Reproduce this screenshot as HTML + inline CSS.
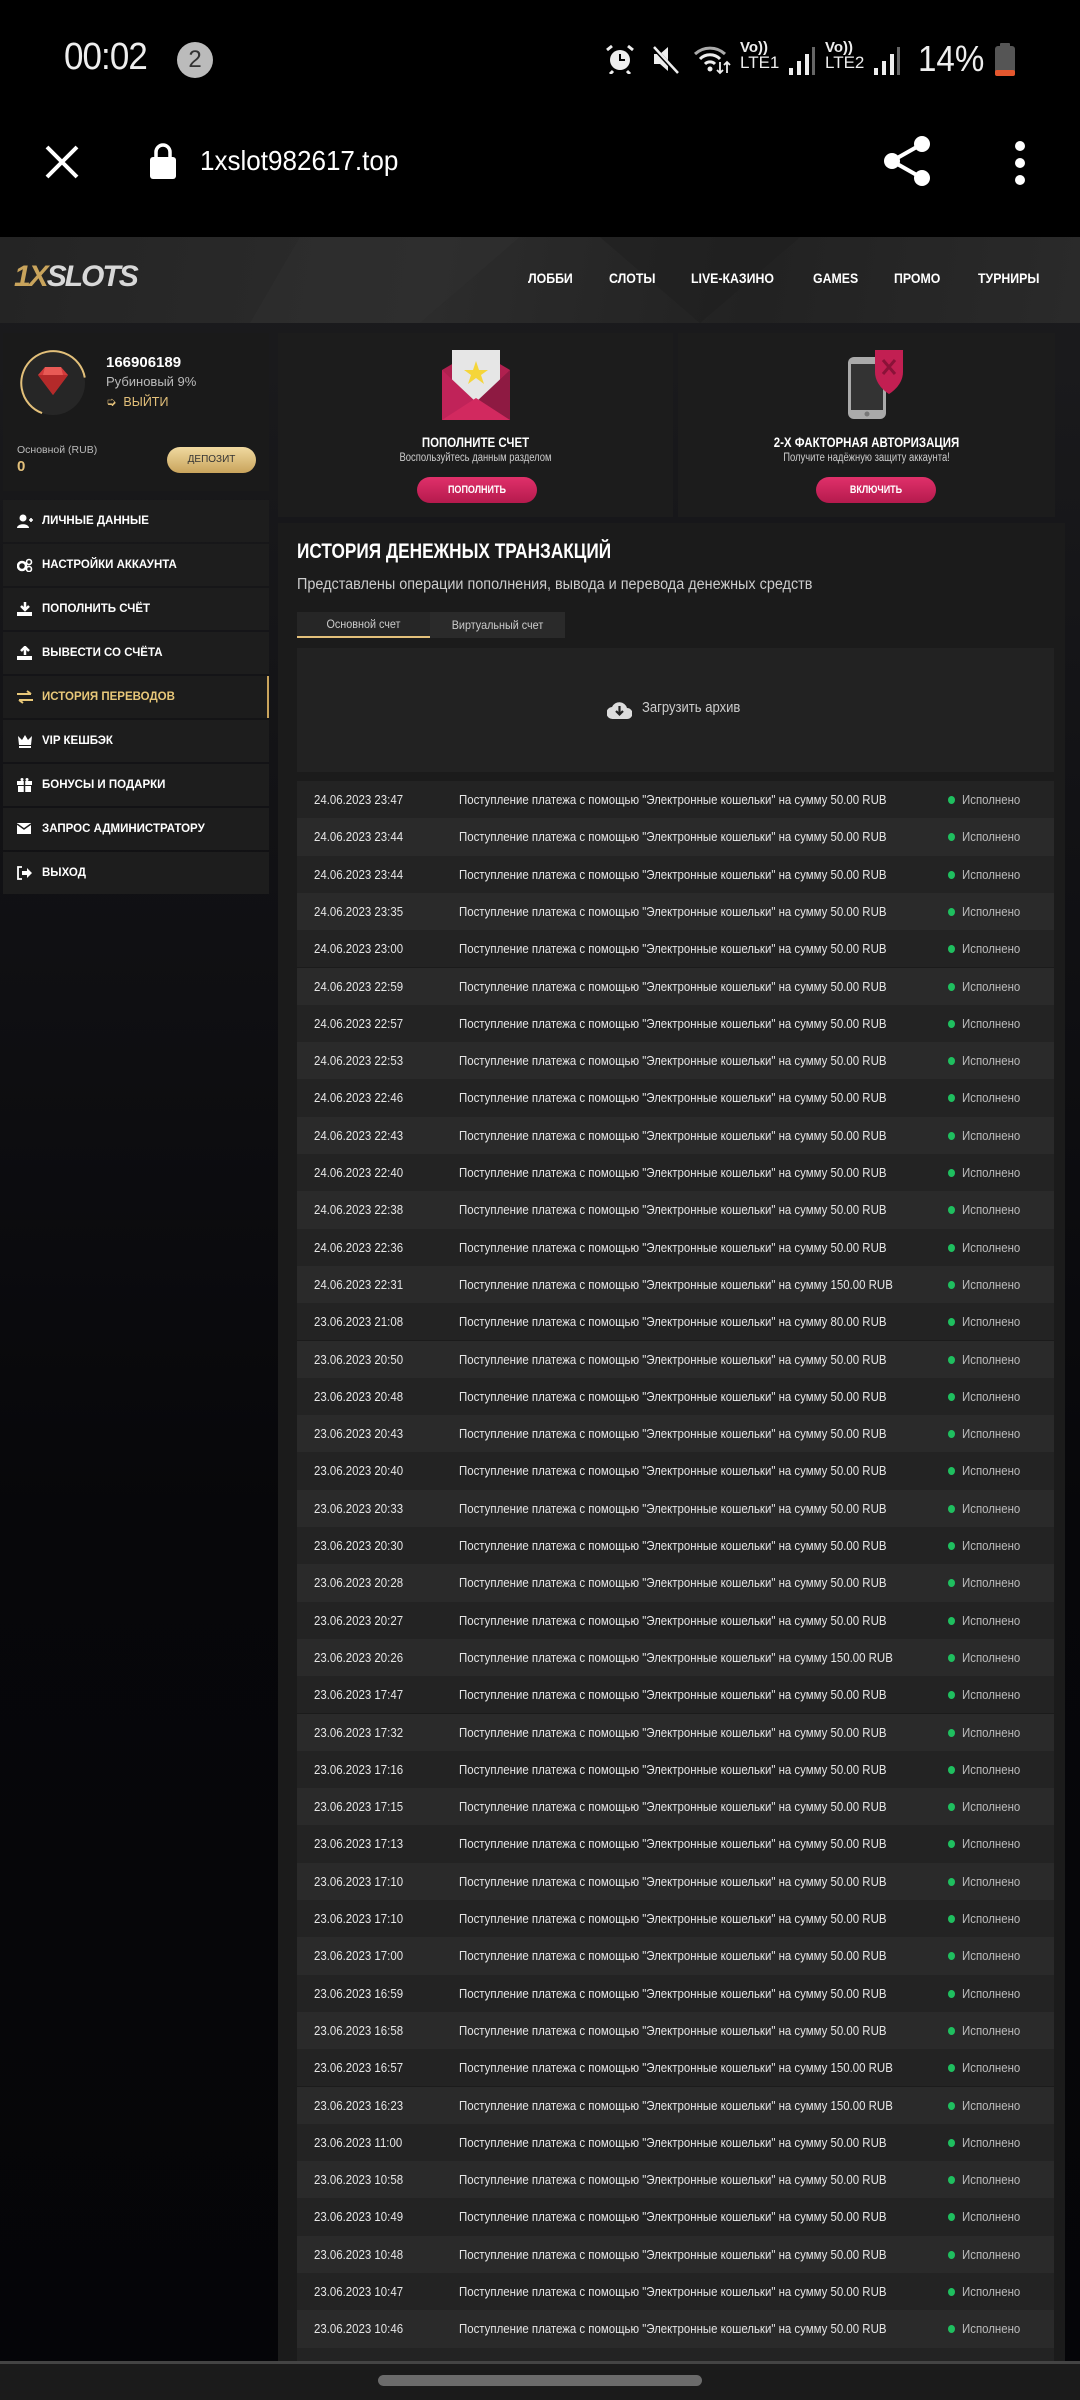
<!DOCTYPE html>
<html><head><meta charset="utf-8">
<style>
*{margin:0;padding:0;box-sizing:border-box}
body{width:1080px;height:2400px;background:#000;position:relative;overflow:hidden;font-family:"Liberation Sans",sans-serif;color:#fff}
.a{position:absolute}
.hdr{left:0;top:237px;width:1080px;height:86px;background:linear-gradient(100deg,#242424 0%,#2c2c2c 40%,#222 70%,#2a2a2a 100%)}
.nav{top:270px;font-size:14px;font-weight:bold;color:#fff;transform:scaleX(.88);transform-origin:left}
.card{background:#1c1c1c}
.mi{left:3px;width:266px;height:42px;background:#1d1d1d;font-size:11.5px;font-weight:bold;line-height:42px;padding-left:39px}
.mi svg{position:absolute;left:14px;top:14px}
.btn{height:26px;border-radius:13px;background:linear-gradient(180deg,#e0306a,#b51a4d);font-size:11px;font-weight:bold;text-align:center;line-height:26px}
.cx{transform:scaleX(.82);transform-origin:center}
.r{position:absolute;left:297px;width:757px;height:37.3px;font-size:13px;color:#e6e6e6;line-height:37.3px}
.r:nth-of-type(odd){background:#232323}.r:nth-of-type(even){background:#2a2a2a}
.r b{position:absolute;font-weight:normal;transform:scaleX(.88);transform-origin:left;white-space:nowrap}
.r .d{left:17px}.r .t{left:162px}.r .s{left:665px;color:#bbb}
.r i{position:absolute;left:651px;top:15px;width:7px;height:8px;border-radius:50%;background:#1fbf5f}
</style></head><body>
<!-- status bar -->
<div class="a" style="left:64px;top:36px;font-size:38px;color:#eee;letter-spacing:-1px;transform:scaleX(.92);transform-origin:left">00:02</div>
<div class="a" style="left:177px;top:42px;width:36px;height:36px;border-radius:50%;background:#bbb;color:#333;font-size:24px;text-align:center;line-height:36px">2</div>
<svg class="a" style="left:605px;top:44px" width="30" height="30" viewBox="0 0 30 30"><circle cx="15" cy="16" r="10" fill="#eee"/><path d="M15 10v6h5" stroke="#000" stroke-width="2" fill="none"/><path d="M2 6l5-4M28 6l-5-4M8 27l-3 3M22 27l3 3" stroke="#eee" stroke-width="3"/></svg>
<svg class="a" style="left:650px;top:44px" width="30" height="30" viewBox="0 0 30 30"><path d="M4 10h6l8-7v24l-8-7H4z" fill="#eee"/><path d="M3 3l24 26" stroke="#000" stroke-width="4"/><path d="M4 3l24 26" stroke="#eee" stroke-width="2.5"/></svg>
<svg class="a" style="left:693px;top:44px" width="42" height="32" viewBox="0 0 42 32"><path d="M2 10a22 22 0 0 1 30 0" stroke="#aaa" stroke-width="3" fill="none"/><path d="M7 15a14 14 0 0 1 20 0M12 20a7 7 0 0 1 10 0" stroke="#eee" stroke-width="3" fill="none"/><circle cx="17" cy="25" r="2.5" fill="#eee"/><path d="M27 18v11M24 26l3 3 3-3M34 29V18M31 21l3-3 3 3" stroke="#eee" stroke-width="1.8" fill="none"/></svg>
<div class="a" style="left:740px;top:40px;font-size:15px;color:#eee;line-height:15px;font-weight:bold">Vo))<br><span style="font-size:17px;font-weight:normal">LTE1</span></div>
<svg class="a" style="left:788px;top:46px" width="28" height="30"><rect x="1" y="22" width="4" height="7" fill="#eee"/><rect x="9" y="15" width="4" height="14" fill="#eee"/><rect x="17" y="8" width="4" height="21" fill="#eee"/><rect x="24" y="1" width="3" height="28" fill="#666"/></svg>
<div class="a" style="left:825px;top:40px;font-size:15px;color:#eee;line-height:15px;font-weight:bold">Vo))<br><span style="font-size:17px;font-weight:normal">LTE2</span></div>
<svg class="a" style="left:873px;top:46px" width="28" height="30"><rect x="1" y="22" width="4" height="7" fill="#eee"/><rect x="9" y="15" width="4" height="14" fill="#eee"/><rect x="17" y="8" width="4" height="21" fill="#eee"/><rect x="24" y="1" width="3" height="28" fill="#666"/></svg>
<div class="a" style="left:918px;top:38px;font-size:36px;color:#eee;transform:scaleX(.92);transform-origin:left">14%</div>
<svg class="a" style="left:994px;top:43px" width="22" height="34"><rect x="6" y="0" width="10" height="4" rx="1" fill="#555"/><rect x="1" y="3" width="20" height="30" rx="3" fill="#555"/><rect x="1" y="27" width="20" height="6" rx="2" fill="#e4572e"/></svg>
<!-- browser bar -->
<svg class="a" style="left:44px;top:144px" width="36" height="36"><path d="M3 3l30 30M33 3L3 33" stroke="#fff" stroke-width="4"/></svg>
<svg class="a" style="left:148px;top:142px" width="30" height="38"><path d="M8 16V10a7 7 0 0 1 14 0v6" stroke="#fff" stroke-width="3.5" fill="none"/><rect x="2" y="15" width="26" height="22" rx="3" fill="#fff"/></svg>
<div class="a" style="left:200px;top:145px;font-size:28px;color:#fff;transform:scaleX(.93);transform-origin:left">1xslot982617.top</div>
<svg class="a" style="left:882px;top:134px" width="50" height="54"><circle cx="40" cy="10" r="8" fill="#fff"/><circle cx="10" cy="27" r="8" fill="#fff"/><circle cx="40" cy="44" r="8" fill="#fff"/><path d="M40 10L10 27L40 44" stroke="#fff" stroke-width="4" fill="none"/></svg>
<svg class="a" style="left:1013px;top:140px" width="14" height="46"><circle cx="7" cy="6" r="5" fill="#fff"/><circle cx="7" cy="23" r="5" fill="#fff"/><circle cx="7" cy="40" r="5" fill="#fff"/></svg>

<div class="a" style="left:0;top:237px;width:1080px;height:2124px;background:linear-gradient(180deg,#1c1c1e 0%,#111114 30%,#07070a 60%,#050508 100%)"></div>
<div class="a hdr"></div>
<svg class="a" style="left:0;top:237px" width="1080" height="86"><polygon points="300,0 520,0 420,86 250,86" fill="#2f2f2f" opacity=".5"/><polygon points="600,0 800,0 700,86" fill="#1e1e1e" opacity=".5"/></svg>
<div class="a" style="left:14px;top:260px;font-size:30px;font-weight:bold;font-style:italic;letter-spacing:-2px"><span style="color:#c9a45c">1X</span><span style="color:#d8d8d8">SLOTS</span></div>
<div class="a nav" style="left:528px">ЛОББИ</div>
<div class="a nav" style="left:609px">СЛОТЫ</div>
<div class="a nav" style="left:691px">LIVE-КАЗИНО</div>
<div class="a nav" style="left:813px">GAMES</div>
<div class="a nav" style="left:894px">ПРОМО</div>
<div class="a nav" style="left:978px">ТУРНИРЫ</div>

<!-- profile card -->
<div class="a card" style="left:3px;top:333px;width:266px;height:158px;background:#1a1a1a"></div>
<svg class="a" style="left:18px;top:348px" width="70" height="70" viewBox="0 0 70 70"><circle cx="35" cy="35" r="32" fill="#262626"/><path d="M35 3a32 32 0 1 1-28 48" stroke="#e3c07a" stroke-width="2" fill="none" transform="rotate(200 35 35)"/><path d="M20 27l7-8h16l7 8-15 20z" fill="#d33b3b"/><path d="M20 27h30L35 47z" fill="#b42a2a"/><path d="M27 19l-2 8h20l-2-8z" fill="#e85a55"/></svg>
<div class="a" style="left:106px;top:354px;font-size:15px;font-weight:bold">166906189</div>
<div class="a" style="left:106px;top:374px;font-size:13px;color:#bbb">Рубиновый 9%</div>
<div class="a" style="left:106px;top:394px;font-size:12.5px;color:#e3c07a">➭ &nbsp;ВЫЙТИ</div>
<div class="a" style="left:17px;top:444px;font-size:10.5px;color:#bbb">Основной (RUB)</div>
<div class="a" style="left:17px;top:458px;font-size:15px;font-weight:bold;color:#e3c07a">0</div>
<div class="a" style="left:167px;top:447px;width:89px;height:26px;border-radius:13px;background:linear-gradient(180deg,#f0d9a0,#c9a45c);color:#333;font-size:10px;text-align:center;line-height:26px">ДЕПОЗИТ</div>

<!-- menu -->
<div class="a mi" style="top:500px"><svg width="16" height="14"><circle cx="6" cy="4" r="3.5" fill="#fff"/><path d="M0 14c0-5 12-5 12 0z" fill="#fff"/><path d="M12 6h4M14 4v4" stroke="#fff" stroke-width="1.6"/></svg>ЛИЧНЫЕ ДАННЫЕ</div>
<div class="a mi" style="top:544px"><svg width="16" height="14"><circle cx="5" cy="8" r="4" fill="none" stroke="#fff" stroke-width="2.5"/><circle cx="12" cy="4" r="2.5" fill="none" stroke="#fff" stroke-width="1.6"/><circle cx="12" cy="11" r="2.5" fill="none" stroke="#fff" stroke-width="1.6"/></svg>НАСТРОЙКИ АККАУНТА</div>
<div class="a mi" style="top:588px"><svg width="16" height="14"><path d="M8 0v7M4 4l4 4 4-4" stroke="#fff" stroke-width="2.5" fill="none"/><rect x="0" y="10" width="15" height="4" fill="#fff"/></svg>ПОПОЛНИТЬ СЧЁТ</div>
<div class="a mi" style="top:632px"><svg width="16" height="14"><path d="M8 9V1M4 5l4-4 4 4" stroke="#fff" stroke-width="2.5" fill="none"/><rect x="0" y="10" width="15" height="4" fill="#fff"/></svg>ВЫВЕСТИ СО СЧЁТА</div>
<div class="a mi" style="top:676px;color:#e9c879;border-right:2px solid #c9a45c;background:#1c1c1c"><svg width="16" height="14"><path d="M0 4h14M10 1l4 3M16 10H2M6 13l-4-3" stroke="#e9c879" stroke-width="2" fill="none"/></svg>ИСТОРИЯ ПЕРЕВОДОВ</div>
<div class="a mi" style="top:720px"><svg width="16" height="14"><path d="M1 2l4 4 3-5 3 5 4-4-1 9H2z" fill="#fff"/><rect x="2" y="12" width="12" height="2" fill="#fff"/></svg>VIP КЕШБЭК</div>
<div class="a mi" style="top:764px"><svg width="16" height="14"><rect x="0" y="3" width="15" height="4" fill="#fff"/><rect x="1" y="8" width="13" height="6" fill="#fff"/><path d="M7.5 3V14" stroke="#1d1d1d" stroke-width="1.5"/><circle cx="5" cy="1.5" r="1.5" fill="#fff"/><circle cx="10" cy="1.5" r="1.5" fill="#fff"/></svg>БОНУСЫ И ПОДАРКИ</div>
<div class="a mi" style="top:808px"><svg width="16" height="14"><rect x="0" y="1" width="14" height="11" fill="#fff"/><path d="M0 2l7 5 7-5" stroke="#1d1d1d" stroke-width="1.5" fill="none"/></svg>ЗАПРОС АДМИНИСТРАТОРУ</div>
<div class="a mi" style="top:852px"><svg width="16" height="14"><path d="M5 1H1v12h4" stroke="#fff" stroke-width="1.8" fill="none"/><path d="M5 5h5V2l5 5-5 5V9H5z" fill="#fff"/></svg>ВЫХОД</div>

<!-- cards -->
<div class="a card" style="left:278px;top:333px;width:395px;height:184px"></div>
<div class="a card" style="left:678px;top:333px;width:377px;height:184px"></div>
<svg class="a" style="left:442px;top:350px" width="68" height="70" viewBox="0 0 68 70"><path d="M0 20L34 0 68 20v50H0z" fill="#b0204f"/><rect x="10" y="0" width="48" height="42" fill="#e6e6e6"/><path d="M10 42h48L34 58z" fill="#e6e6e6"/><path d="M0 20v50l34-18z" fill="#c02359"/><path d="M68 20v50L34 52z" fill="#8e1a42"/><path d="M0 70l34-22 34 22z" fill="#d2295f"/><polygon points="34,11 37,20 46,20 39,25 42,34 34,28 26,34 29,25 22,20 31,20" fill="#f5d53a"/></svg>
<svg class="a" style="left:846px;top:350px" width="60" height="70" viewBox="0 0 60 70"><rect x="2" y="7" width="38" height="62" rx="6" fill="#aaa"/><rect x="5" y="14" width="32" height="46" fill="#333"/><circle cx="21" cy="64" r="2.5" fill="#777"/><path d="M29 0h28v22c0 14-14 22-14 22s-14-8-14-22z" fill="#c21f52"/><path d="M37 10l12 14M49 10L37 24" stroke="#8a1238" stroke-width="3"/></svg>
<div class="a cx" style="left:278px;width:395px;text-align:center;top:434px;font-size:14px;font-weight:bold">ПОПОЛНИТЕ СЧЕТ</div>
<div class="a cx" style="left:278px;width:395px;text-align:center;top:452px;font-size:11.5px;color:#ccc">Воспользуйтесь данным разделом</div>
<div class="a btn" style="left:417px;top:477px;width:120px"><div class="cx">ПОПОЛНИТЬ</div></div>
<div class="a cx" style="left:678px;width:377px;text-align:center;top:434px;font-size:14px;font-weight:bold">2-Х ФАКТОРНАЯ АВТОРИЗАЦИЯ</div>
<div class="a cx" style="left:678px;width:377px;text-align:center;top:452px;font-size:11.5px;color:#ccc">Получите надёжную защиту аккаунта!</div>
<div class="a btn" style="left:816px;top:477px;width:120px"><div class="cx">ВКЛЮЧИТЬ</div></div>

<!-- history panel -->
<div class="a" style="left:278px;top:523px;width:787px;height:1838px;background:#1b1b1b"></div>
<div class="a" style="left:297px;top:540px;font-size:21px;font-weight:bold;white-space:nowrap;transform:scaleX(.82);transform-origin:left">ИСТОРИЯ ДЕНЕЖНЫХ ТРАНЗАКЦИЙ</div>
<div class="a" style="left:297px;top:576px;font-size:15.5px;color:#ccc;white-space:nowrap;transform:scaleX(.93);transform-origin:left">Представлены операции пополнения, вывода и перевода денежных средств</div>
<div class="a" style="left:297px;top:612px;width:133px;height:26px;background:#262626;border-bottom:2px solid #e3c07a;font-size:12px;color:#ccc;text-align:center;line-height:25px"><div class="cx" style="transform:scaleX(.9)">Основной счет</div></div>
<div class="a" style="left:430px;top:612px;width:135px;height:26px;background:#2a2a2a;font-size:12px;color:#ccc;text-align:center;line-height:26px"><div class="cx" style="transform:scaleX(.9)">Виртуальный счет</div></div>
<div class="a" style="left:297px;top:648px;width:757px;height:124px;background:#222"></div>
<svg class="a" style="left:607px;top:699px" width="25" height="22" viewBox="0 0 25 22"><path d="M6 20a6 6 0 0 1-1-12 8 8 0 0 1 15 1 5.5 5.5 0 0 1 0 11z" fill="#ddd"/><path d="M12.5 7v8M9 12l3.5 3.5L16 12" stroke="#222" stroke-width="2.2" fill="none"/></svg>
<div class="a" style="left:642px;top:700px;font-size:14.5px;color:#ccc;transform:scaleX(.9);transform-origin:left">Загрузить архив</div>

<div class="a" style="left:0;top:0">
<div class="r" style="top:781px"><b class="d">24.06.2023 23:47</b><b class="t">Поступление платежа с помощью "Электронные кошельки" на сумму 50.00 RUB</b><i></i><b class="s">Исполнено</b></div>
<div class="r" style="top:818.3px"><b class="d">24.06.2023 23:44</b><b class="t">Поступление платежа с помощью "Электронные кошельки" на сумму 50.00 RUB</b><i></i><b class="s">Исполнено</b></div>
<div class="r" style="top:855.6px"><b class="d">24.06.2023 23:44</b><b class="t">Поступление платежа с помощью "Электронные кошельки" на сумму 50.00 RUB</b><i></i><b class="s">Исполнено</b></div>
<div class="r" style="top:892.9px"><b class="d">24.06.2023 23:35</b><b class="t">Поступление платежа с помощью "Электронные кошельки" на сумму 50.00 RUB</b><i></i><b class="s">Исполнено</b></div>
<div class="r" style="top:930.2px"><b class="d">24.06.2023 23:00</b><b class="t">Поступление платежа с помощью "Электронные кошельки" на сумму 50.00 RUB</b><i></i><b class="s">Исполнено</b></div>
<div class="r" style="top:967.5px"><b class="d">24.06.2023 22:59</b><b class="t">Поступление платежа с помощью "Электронные кошельки" на сумму 50.00 RUB</b><i></i><b class="s">Исполнено</b></div>
<div class="r" style="top:1004.8px"><b class="d">24.06.2023 22:57</b><b class="t">Поступление платежа с помощью "Электронные кошельки" на сумму 50.00 RUB</b><i></i><b class="s">Исполнено</b></div>
<div class="r" style="top:1042.1px"><b class="d">24.06.2023 22:53</b><b class="t">Поступление платежа с помощью "Электронные кошельки" на сумму 50.00 RUB</b><i></i><b class="s">Исполнено</b></div>
<div class="r" style="top:1079.4px"><b class="d">24.06.2023 22:46</b><b class="t">Поступление платежа с помощью "Электронные кошельки" на сумму 50.00 RUB</b><i></i><b class="s">Исполнено</b></div>
<div class="r" style="top:1116.7px"><b class="d">24.06.2023 22:43</b><b class="t">Поступление платежа с помощью "Электронные кошельки" на сумму 50.00 RUB</b><i></i><b class="s">Исполнено</b></div>
<div class="r" style="top:1154px"><b class="d">24.06.2023 22:40</b><b class="t">Поступление платежа с помощью "Электронные кошельки" на сумму 50.00 RUB</b><i></i><b class="s">Исполнено</b></div>
<div class="r" style="top:1191.3px"><b class="d">24.06.2023 22:38</b><b class="t">Поступление платежа с помощью "Электронные кошельки" на сумму 50.00 RUB</b><i></i><b class="s">Исполнено</b></div>
<div class="r" style="top:1228.6px"><b class="d">24.06.2023 22:36</b><b class="t">Поступление платежа с помощью "Электронные кошельки" на сумму 50.00 RUB</b><i></i><b class="s">Исполнено</b></div>
<div class="r" style="top:1265.9px"><b class="d">24.06.2023 22:31</b><b class="t">Поступление платежа с помощью "Электронные кошельки" на сумму 150.00 RUB</b><i></i><b class="s">Исполнено</b></div>
<div class="r" style="top:1303.2px"><b class="d">23.06.2023 21:08</b><b class="t">Поступление платежа с помощью "Электронные кошельки" на сумму 80.00 RUB</b><i></i><b class="s">Исполнено</b></div>
<div class="r" style="top:1340.5px"><b class="d">23.06.2023 20:50</b><b class="t">Поступление платежа с помощью "Электронные кошельки" на сумму 50.00 RUB</b><i></i><b class="s">Исполнено</b></div>
<div class="r" style="top:1377.8px"><b class="d">23.06.2023 20:48</b><b class="t">Поступление платежа с помощью "Электронные кошельки" на сумму 50.00 RUB</b><i></i><b class="s">Исполнено</b></div>
<div class="r" style="top:1415.1px"><b class="d">23.06.2023 20:43</b><b class="t">Поступление платежа с помощью "Электронные кошельки" на сумму 50.00 RUB</b><i></i><b class="s">Исполнено</b></div>
<div class="r" style="top:1452.4px"><b class="d">23.06.2023 20:40</b><b class="t">Поступление платежа с помощью "Электронные кошельки" на сумму 50.00 RUB</b><i></i><b class="s">Исполнено</b></div>
<div class="r" style="top:1489.7px"><b class="d">23.06.2023 20:33</b><b class="t">Поступление платежа с помощью "Электронные кошельки" на сумму 50.00 RUB</b><i></i><b class="s">Исполнено</b></div>
<div class="r" style="top:1527px"><b class="d">23.06.2023 20:30</b><b class="t">Поступление платежа с помощью "Электронные кошельки" на сумму 50.00 RUB</b><i></i><b class="s">Исполнено</b></div>
<div class="r" style="top:1564.3px"><b class="d">23.06.2023 20:28</b><b class="t">Поступление платежа с помощью "Электронные кошельки" на сумму 50.00 RUB</b><i></i><b class="s">Исполнено</b></div>
<div class="r" style="top:1601.6px"><b class="d">23.06.2023 20:27</b><b class="t">Поступление платежа с помощью "Электронные кошельки" на сумму 50.00 RUB</b><i></i><b class="s">Исполнено</b></div>
<div class="r" style="top:1638.9px"><b class="d">23.06.2023 20:26</b><b class="t">Поступление платежа с помощью "Электронные кошельки" на сумму 150.00 RUB</b><i></i><b class="s">Исполнено</b></div>
<div class="r" style="top:1676.2px"><b class="d">23.06.2023 17:47</b><b class="t">Поступление платежа с помощью "Электронные кошельки" на сумму 50.00 RUB</b><i></i><b class="s">Исполнено</b></div>
<div class="r" style="top:1713.5px"><b class="d">23.06.2023 17:32</b><b class="t">Поступление платежа с помощью "Электронные кошельки" на сумму 50.00 RUB</b><i></i><b class="s">Исполнено</b></div>
<div class="r" style="top:1750.8px"><b class="d">23.06.2023 17:16</b><b class="t">Поступление платежа с помощью "Электронные кошельки" на сумму 50.00 RUB</b><i></i><b class="s">Исполнено</b></div>
<div class="r" style="top:1788.1px"><b class="d">23.06.2023 17:15</b><b class="t">Поступление платежа с помощью "Электронные кошельки" на сумму 50.00 RUB</b><i></i><b class="s">Исполнено</b></div>
<div class="r" style="top:1825.4px"><b class="d">23.06.2023 17:13</b><b class="t">Поступление платежа с помощью "Электронные кошельки" на сумму 50.00 RUB</b><i></i><b class="s">Исполнено</b></div>
<div class="r" style="top:1862.7px"><b class="d">23.06.2023 17:10</b><b class="t">Поступление платежа с помощью "Электронные кошельки" на сумму 50.00 RUB</b><i></i><b class="s">Исполнено</b></div>
<div class="r" style="top:1900px"><b class="d">23.06.2023 17:10</b><b class="t">Поступление платежа с помощью "Электронные кошельки" на сумму 50.00 RUB</b><i></i><b class="s">Исполнено</b></div>
<div class="r" style="top:1937.3px"><b class="d">23.06.2023 17:00</b><b class="t">Поступление платежа с помощью "Электронные кошельки" на сумму 50.00 RUB</b><i></i><b class="s">Исполнено</b></div>
<div class="r" style="top:1974.6px"><b class="d">23.06.2023 16:59</b><b class="t">Поступление платежа с помощью "Электронные кошельки" на сумму 50.00 RUB</b><i></i><b class="s">Исполнено</b></div>
<div class="r" style="top:2011.9px"><b class="d">23.06.2023 16:58</b><b class="t">Поступление платежа с помощью "Электронные кошельки" на сумму 50.00 RUB</b><i></i><b class="s">Исполнено</b></div>
<div class="r" style="top:2049.2px"><b class="d">23.06.2023 16:57</b><b class="t">Поступление платежа с помощью "Электронные кошельки" на сумму 150.00 RUB</b><i></i><b class="s">Исполнено</b></div>
<div class="r" style="top:2086.5px"><b class="d">23.06.2023 16:23</b><b class="t">Поступление платежа с помощью "Электронные кошельки" на сумму 150.00 RUB</b><i></i><b class="s">Исполнено</b></div>
<div class="r" style="top:2123.8px"><b class="d">23.06.2023 11:00</b><b class="t">Поступление платежа с помощью "Электронные кошельки" на сумму 50.00 RUB</b><i></i><b class="s">Исполнено</b></div>
<div class="r" style="top:2161.1px"><b class="d">23.06.2023 10:58</b><b class="t">Поступление платежа с помощью "Электронные кошельки" на сумму 50.00 RUB</b><i></i><b class="s">Исполнено</b></div>
<div class="r" style="top:2198.4px"><b class="d">23.06.2023 10:49</b><b class="t">Поступление платежа с помощью "Электронные кошельки" на сумму 50.00 RUB</b><i></i><b class="s">Исполнено</b></div>
<div class="r" style="top:2235.7px"><b class="d">23.06.2023 10:48</b><b class="t">Поступление платежа с помощью "Электронные кошельки" на сумму 50.00 RUB</b><i></i><b class="s">Исполнено</b></div>
<div class="r" style="top:2273px"><b class="d">23.06.2023 10:47</b><b class="t">Поступление платежа с помощью "Электронные кошельки" на сумму 50.00 RUB</b><i></i><b class="s">Исполнено</b></div>
<div class="r" style="top:2310.3px"><b class="d">23.06.2023 10:46</b><b class="t">Поступление платежа с помощью "Электронные кошельки" на сумму 50.00 RUB</b><i></i><b class="s">Исполнено</b></div>
<div class="r" style="top:2347.6px"></div>
</div>

<!-- nav bar -->
<div class="a" style="left:0;top:2361px;width:1080px;height:39px;background:#1b1b1b;border-top:3px solid #444"></div>
<div class="a" style="left:378px;top:2375px;width:324px;height:11px;border-radius:6px;background:#6b6b6b"></div>
</body></html>
